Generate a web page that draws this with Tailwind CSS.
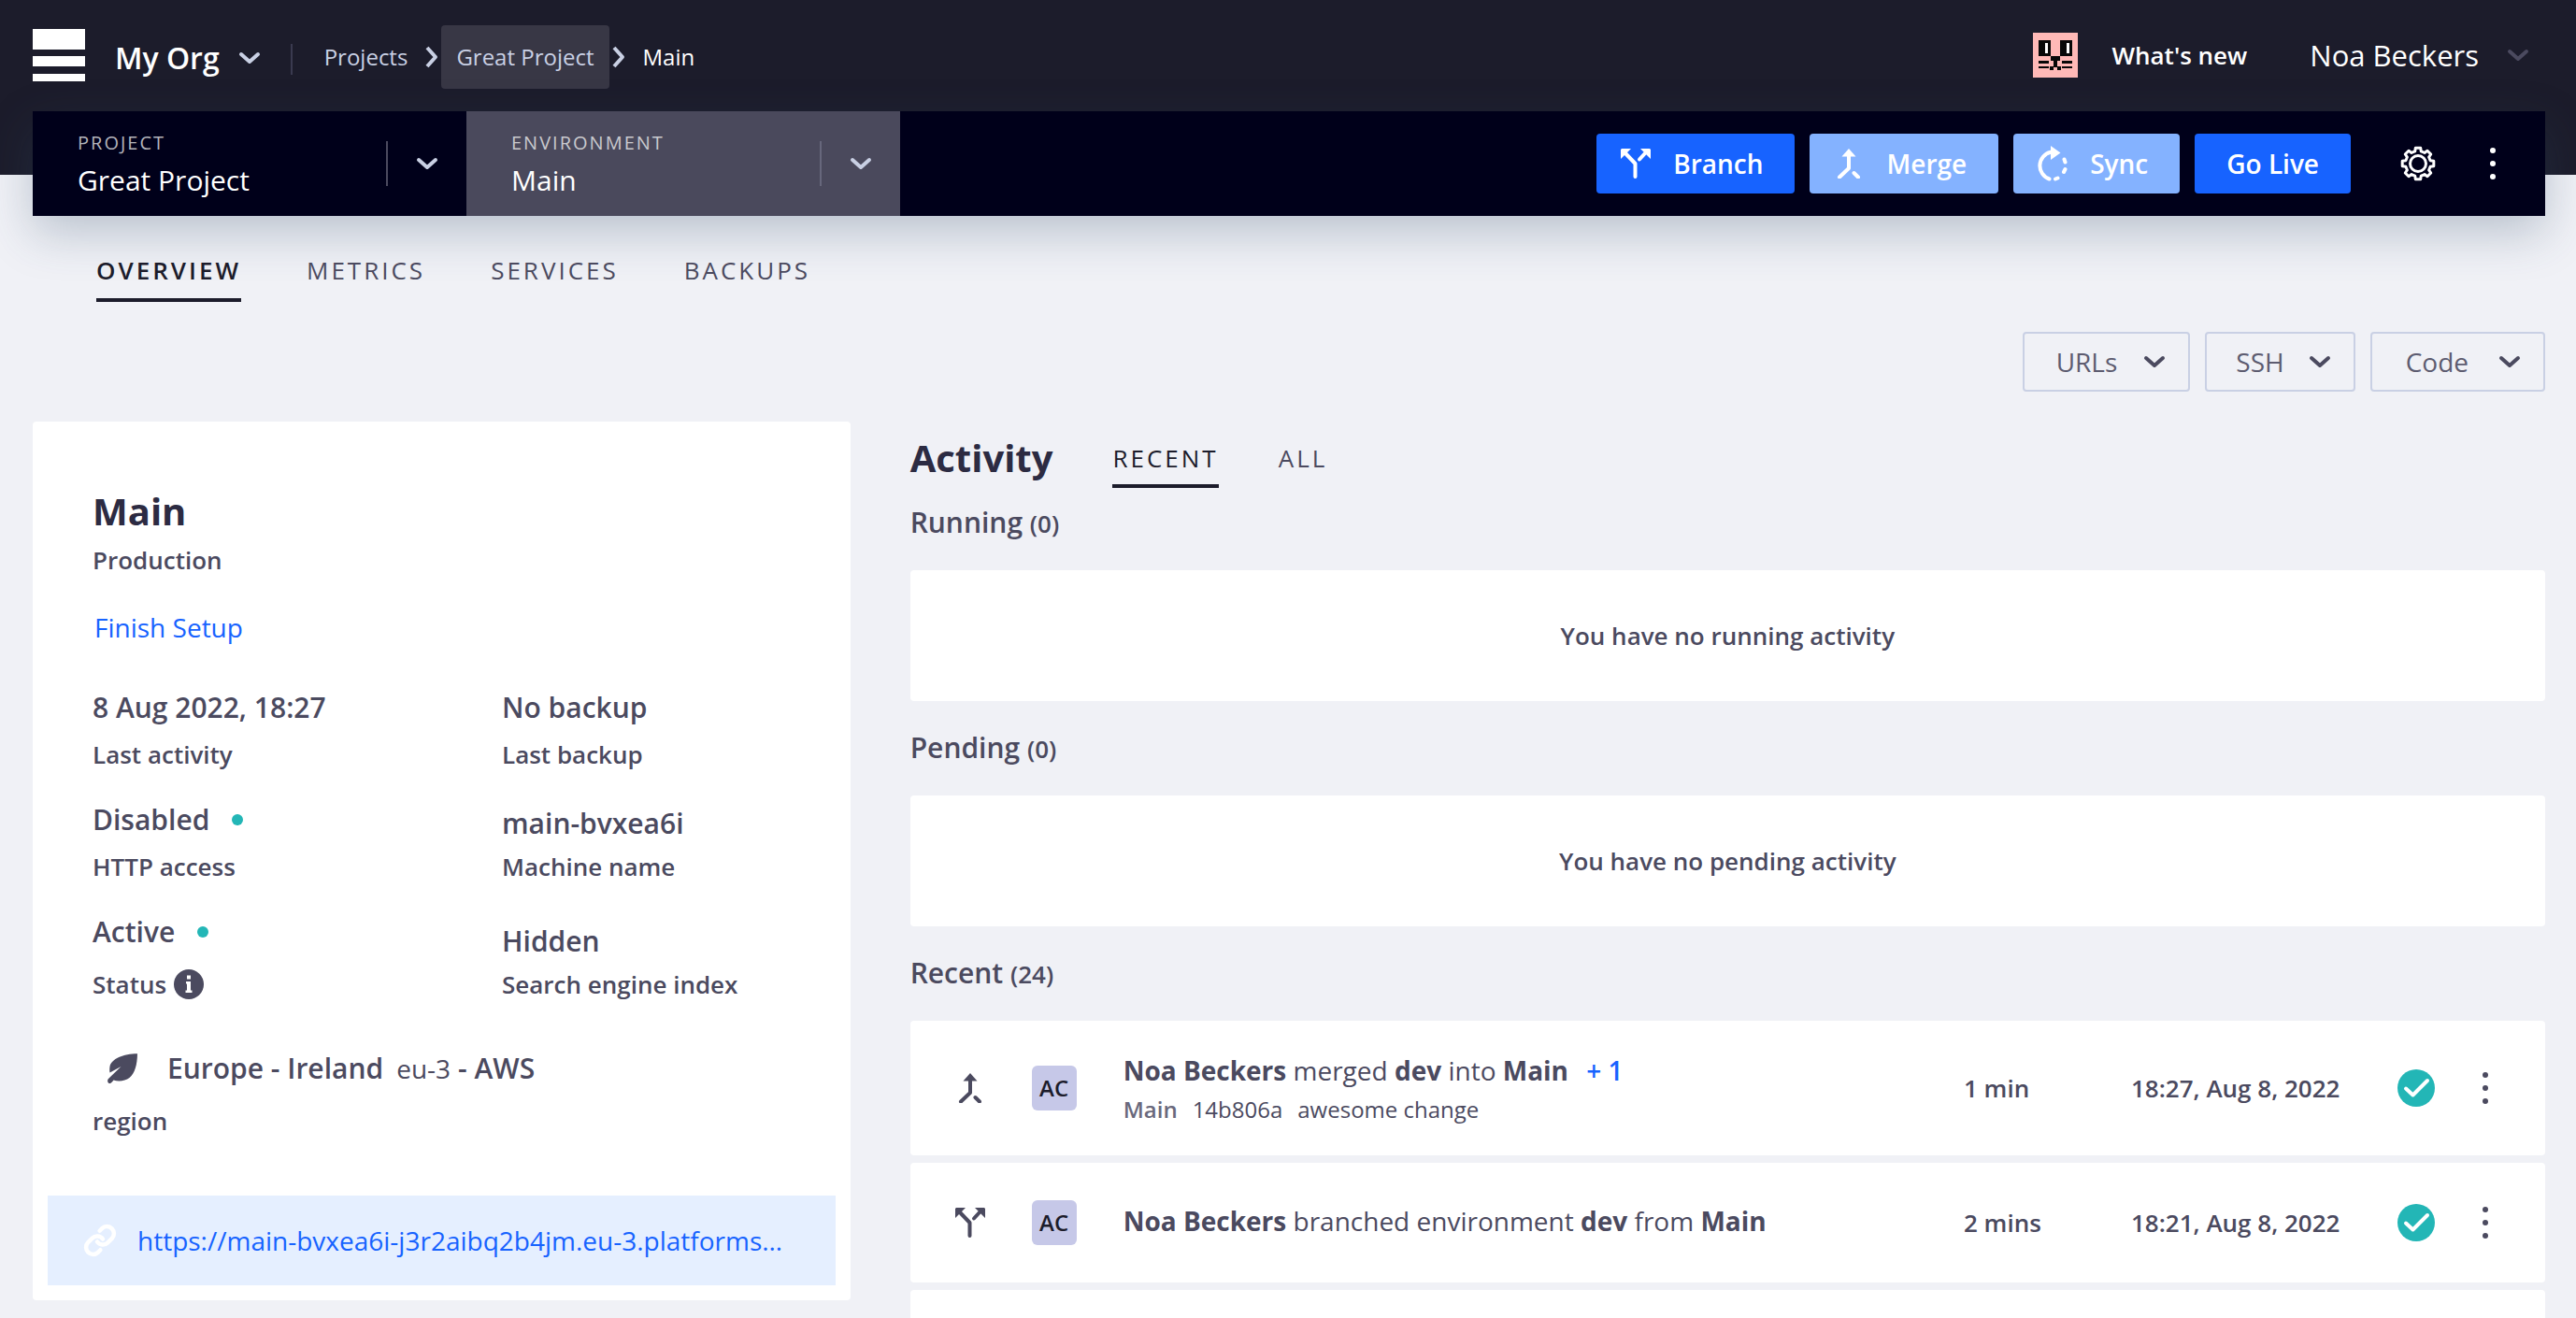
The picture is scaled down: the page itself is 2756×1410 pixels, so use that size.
<!DOCTYPE html>
<html lang="en">
<head>
<meta charset="utf-8">
<meta name="viewport" content="width=device-width, initial-scale=1">
<title>Main - Great Project</title>
<script src="https://cdn.jsdelivr.net/npm/@tailwindcss/browser@4"></script>
</head>
<body class="bg-[#f0f1f6] font-['Open_Sans',sans-serif] text-[#4b4a5f]">
<svg class="hidden" aria-hidden="true">
  <symbol id="down" viewBox="0 0 24 14"><path d="M3 3l9 8 9-8" fill="none" stroke="currentColor" stroke-width="4" stroke-linecap="round" stroke-linejoin="round"/></symbol>
  <symbol id="right" viewBox="0 0 16 24"><path d="M3 2l9 10-9 10" fill="none" stroke="currentColor" stroke-width="4" stroke-linejoin="round"/></symbol>
  <symbol id="branch" viewBox="0 0 32 32"><path d="M5 5l10.500 11V30M26 5l-6 6.500" fill="none" stroke="currentColor" stroke-width="4" stroke-linecap="round" stroke-linejoin="round"/><path d="M1 0h10L0 11V1zM31 0H21l11 11V1z" fill="currentColor"/></symbol>
  <symbol id="merge" viewBox="0 0 32 32"><path d="M16 6v15L6 30.500M21.500 26l4.500 4.500" fill="none" stroke="currentColor" stroke-width="4" stroke-linecap="round" stroke-linejoin="round"/><path d="M16 0l7.500 8.500h-15z" fill="currentColor"/></symbol>
  <symbol id="sync" viewBox="0 0 32 38"><path d="M14 6.700A15 15 0 0 0 12.500 35.500M28.500 14.500l1 3M29.500 25l-1.500 3M21.500 34.500l-2.500 1" fill="none" stroke="currentColor" stroke-width="4" stroke-linecap="round"/><path d="M14 0l10.500 7.500L14 15z" fill="currentColor"/></symbol>
  <symbol id="dots" viewBox="0 0 8 34"><g fill="currentColor"><circle cx="4" cy="3" r="3"/><circle cx="4" cy="17" r="3"/><circle cx="4" cy="31" r="3"/></g></symbol>
  <symbol id="check" viewBox="0 0 40 40"><circle cx="20" cy="20" r="20" fill="#23b6b6"/><path d="M9 20.500l7.500 7L32 12" fill="none" stroke="#fff" stroke-width="4" stroke-linecap="round" stroke-linejoin="round"/></symbol>
</svg>

<header class="flex h-[187px] items-start bg-[#1c1c2b] pr-[50px] pl-[35px] text-white">
  <a href="#" aria-label="Home" class="mt-[31px] block"><svg class="h-14 w-14" viewBox="0 0 56 56" fill="#fff"><path d="M0 0h56v22H0zM0 29h56v11H0zM0 48h56v8H0z"/></svg></a>
  <button class="mt-10 ml-8 flex h-11 items-center gap-[20px] text-[32px] font-semibold">My Org<svg class="h-[14px] w-6 text-[#c9d0e4]"><use href="#down"/></svg></button>
  <span class="mt-[47px] ml-8 h-[33px] w-[2px] bg-[#3a3a50]"></span>
  <nav aria-label="Breadcrumb" class="mt-[27px] ml-[34px] flex h-[68px] items-center text-[24px] text-[#c9d0e4]">
    <a href="#">Projects</a>
    <svg class="mr-[2px] ml-[18px] h-6 w-4"><use href="#right"/></svg>
    <a href="#" class="flex h-full items-center rounded bg-[#383745] px-4">Great Project</a>
    <svg class="mr-[18px] ml-[2px] h-6 w-4"><use href="#right"/></svg>
    <a href="#" class="text-white">Main</a>
  </nav>
  <div class="mt-[35px] ml-auto flex h-12 items-center">
    <svg class="h-12 w-12" viewBox="0 0 48 48" shape-rendering="crispEdges"><path fill="#ffb9b7" d="M0 0h48v48H0z"/><path fill="#080808" d="M6 8h13v17H6zM29 8h13v17H29zM19 25h10v5h-3v6h4v4h-4v-3h-4v3h-4v-4h4v-6h-3zM6 30h11v3H6zM31 30h11v3H31zM6 36h11v2H6zM31 36h11v2H31z"/><path fill="#fff" d="M13 11h3v11h-3zM36 11h3v11h-3z"/></svg>
    <a href="#" class="ml-9 text-[26px] font-semibold">What's new</a>
    <button class="ml-[67px] flex items-center gap-[30px] text-[31px]">Noa Beckers<svg class="h-[14px] w-6 text-[#4b4a5f]"><use href="#down"/></svg></button>
  </div>
</header>

<main class="pr-[33px] pl-[35px]">
  <section class="relative -mt-[68px] flex h-28 items-stretch bg-[#00001a] pr-[52px] text-white shadow-[0_18px_50px_rgba(45,75,105,0.28)]">
    <button class="flex w-[464px] items-center pr-[30px] pl-12 text-left">
      <span class="flex-1"><span class="block text-[20px] leading-7 font-medium tracking-[2px] text-[#b3b3ba]">PROJECT</span><span class="mt-2 block text-[30px] leading-9">Great Project</span></span>
      <span class="mr-[30px] h-12 w-[2px] bg-[#4b4a5f]"></span>
      <svg class="h-[14px] w-6 text-[#c9d0e4]"><use href="#down"/></svg>
    </button>
    <button class="flex w-[464px] items-center bg-[#4a495c] pr-[30px] pl-12 text-left">
      <span class="flex-1"><span class="block text-[20px] leading-7 font-medium tracking-[2px] text-[#c9c9ce]">ENVIRONMENT</span><span class="mt-2 block text-[30px] leading-9 font-medium">Main</span></span>
      <span class="mr-[30px] h-12 w-[2px] bg-[#67677c]"></span>
      <svg class="h-[14px] w-6 text-[#c9d0e4]"><use href="#down"/></svg>
    </button>
    <div class="ml-auto flex items-center gap-4 text-[28px] font-semibold">
      <button class="flex h-16 items-center gap-6 rounded bg-[#1763ff] pr-[34px] pl-[26px]"><svg class="size-8"><use href="#branch"/></svg>Branch</button>
      <button class="flex h-16 items-center gap-6 rounded bg-[#84b2ff] pr-[34px] pl-[26px]"><svg class="size-8"><use href="#merge"/></svg>Merge</button>
      <button class="flex h-16 items-center gap-6 rounded bg-[#84b2ff] pr-[34px] pl-[26px]"><svg class="h-[38px] w-8"><use href="#sync"/></svg>Sync</button>
      <button class="h-16 rounded bg-[#1763ff] px-[34px]">Go Live</button>
      <button aria-label="Settings" class="ml-9"><svg class="size-10" viewBox="-20 -20 40 40" fill="none" stroke="#fff" stroke-width="3" stroke-linejoin="round"><circle r="8.500"/><path d="M16.800 2.700L13.100 3.300 11.600 6.950 13.750 10 10 13.750 6.950 11.600 3.300 13.100 2.700 16.800H-2.700L-3.300 13.100-6.950 11.600-10 13.750-13.750 10-11.600 6.950-13.100 3.300-16.800 2.700V-2.700L-13.100-3.300-11.600-6.950-13.750-10-10-13.750-6.950-11.600-3.300-13.100-2.700-16.800H2.700L3.300-13.100 6.950-11.600 10-13.750 13.750-10 11.600-6.950 13.100-3.300 16.800-2.700z"/></svg></button>
      <button aria-label="More" class="ml-10"><svg class="h-[34px] w-2"><use href="#dots"/></svg></button>
    </div>
  </section>

  <nav aria-label="Environment" class="relative mt-10 ml-[68px] flex gap-[70px] text-[26px] leading-9 tracking-[3px]">
    <a href="#" class="border-b-4 border-[#1c1c2b] pb-3 font-semibold text-[#1c1c2b]">OVERVIEW</a>
    <a href="#">METRICS</a>
    <a href="#">SERVICES</a>
    <a href="#">BACKUPS</a>
  </nav>

  <div class="mt-8 flex justify-end gap-4 text-[28px] text-[#5d5c70]">
    <button class="flex h-16 items-center gap-7 rounded border-2 border-[#c9d0e4] pr-6 pl-[34px]">URLs<svg class="h-[14px] w-6 text-[#4b4a5f]"><use href="#down"/></svg></button>
    <button class="flex h-16 items-center gap-[26px] rounded border-2 border-[#c9d0e4] pr-6 pl-[31px]">SSH<svg class="h-[14px] w-6 text-[#4b4a5f]"><use href="#down"/></svg></button>
    <button class="flex h-16 items-center gap-8 rounded border-2 border-[#c9d0e4] pr-6 pl-9">Code<svg class="h-[14px] w-6 text-[#4b4a5f]"><use href="#down"/></svg></button>
  </div>

  <div class="mt-8 grid grid-cols-[1fr_2fr] items-start gap-16">
    <section class="min-w-0 rounded bg-white pt-[72px] pb-4 font-semibold">
      <div class="px-[64px]">
        <h1 class="text-[40px] leading-[48px] font-bold text-[#2c2b42]">Main</h1>
        <p class="mt-3 text-[26px] leading-8">Production</p>
        <a href="#" class="mt-[38px] ml-[2px] block text-[28px] leading-9 font-normal text-[#1763ff]">Finish Setup</a>
        <div class="mt-12 grid grid-cols-[438px_1fr] gap-y-[34px] text-[26px] leading-8">
          <div class="flex flex-col gap-[14px]"><b class="text-[30px] leading-10 font-semibold">8 Aug 2022, 18:27</b><span>Last activity</span></div>
          <div class="flex flex-col gap-[14px]"><b class="text-[30px] leading-10 font-semibold">No backup</b><span>Last backup</span></div>
          <div class="flex flex-col gap-[14px]"><b class="flex items-center gap-6 text-[30px] leading-10 font-semibold">Disabled<i class="size-3 rounded-full bg-[#23b6b6]"></i></b><span>HTTP access</span></div>
          <div class="flex flex-col justify-end gap-[10px]"><b class="text-[30px] leading-10 font-semibold">main-bvxea6i</b><span>Machine name</span></div>
          <div class="flex flex-col gap-5"><b class="flex items-center gap-6 text-[30px] leading-10 font-semibold">Active<i class="size-3 rounded-full bg-[#23b6b6]"></i></b><span class="flex items-center gap-2">Status<svg class="size-8" viewBox="0 0 32 32"><circle cx="16" cy="16" r="16" fill="currentColor"/><path d="M13 13h5v9.500h1.500V25h-7v-2.500H14v-7h-1zM14 6.500h4v4h-4z" fill="#fff"/></svg></span></div>
          <div class="flex flex-col justify-end gap-[10px]"><b class="text-[30px] leading-10 font-semibold">Hidden</b><span>Search engine index</span></div>
        </div>
        <div class="mt-[54px] flex items-center text-[30px] leading-10">
          <svg class="mr-8 ml-4 size-8" viewBox="0 0 32 32"><path d="M32 .3C17 .3 4 6 2.500 14c-.4 2.500-.3 4.500 0 6.500L14.500 14 1 27c-1.500 1.500-1 4.500 1 5 1.500.2 2.500-1 4.500-3.500C12 30.500 19 29.500 23.500 26 29.500 21 31.800 12 32 .3z" fill="currentColor"/></svg>
          Europe - Ireland<span class="mr-2 ml-[14px] text-[28px] font-normal">eu-3</span>- AWS
        </div>
        <p class="mt-5 text-[26px] leading-8">region</p>
      </div>
      <a href="#" class="mx-4 mt-16 flex h-24 items-center gap-[22px] bg-[#e5efff] pr-9 pl-[38px] text-[28px] font-normal text-[#1763ff]">
        <svg class="size-9 shrink-0" viewBox="0 0 24 24" fill="none" stroke="#fff" stroke-width="3" stroke-linecap="round" stroke-linejoin="round"><path d="M10 13a5 5 0 0 0 7.540.54l3-3a5 5 0 0 0-7.070-7.070l-1.720 1.710"/><path d="M14 11a5 5 0 0 0-7.540-.54l-3 3a5 5 0 0 0 7.070 7.070l1.710-1.710"/></svg>
        <span class="whitespace-nowrap">https://main-bvxea6i-j3r2aibq2b4jm.eu-3.platforms…</span>
      </a>
    </section>

    <section class="min-w-0 pt-[14px] font-semibold">
      <div class="flex items-start">
        <h2 class="text-[40px] leading-[50px] font-bold text-[#2c2b42]">Activity</h2>
        <nav aria-label="Activity" class="mt-[7px] ml-16 flex gap-16 text-[26px] leading-9 font-normal tracking-[3px]">
          <a href="#" class="border-b-4 border-[#1c1c2b] pb-[10px] text-[#1c1c2b]">RECENT</a>
          <a href="#">ALL</a>
        </nav>
      </div>
      <h3 class="mt-[17px] h-10 text-[30px] leading-10">Running <span class="text-[26px] leading-none">(0)</span></h3>
      <p class="mt-[31px] flex h-[140px] items-center justify-center rounded bg-white text-[26px]">You have no running activity</p>
      <h3 class="mt-[30px] h-10 text-[30px] leading-10">Pending <span class="text-[26px] leading-none">(0)</span></h3>
      <p class="mt-[31px] flex h-[140px] items-center justify-center rounded bg-white text-[26px]">You have no pending activity</p>
      <h3 class="mt-[30px] h-10 text-[30px] leading-10">Recent <span class="text-[26px] leading-none">(24)</span></h3>
      <ul class="mt-[31px] flex h-[318px] flex-col gap-2 overflow-hidden text-[26px]">
        <li class="flex h-36 shrink-0 items-center rounded bg-white pr-[60px] pl-12">
          <svg class="size-8"><use href="#merge"/></svg>
          <span class="ml-[50px] flex size-12 items-center justify-center rounded-md bg-[#c6c8e8] text-[24px] text-[#1c1c2b]">AC</span>
          <div class="ml-[50px] flex-1">
            <p class="text-[28px] leading-10 font-normal"><b>Noa Beckers</b> merged <b>dev</b> into <b>Main</b> <a href="#" class="ml-3 font-semibold text-[#1763ff]">+ 1</a></p>
            <p class="mt-[6px] flex gap-4 text-[24px] leading-8 font-normal"><span class="font-semibold text-[#6a697c]">Main</span><span>14b806a</span><span>awesome change</span></p>
          </div>
          <span class="w-[179px]">1 min</span>
          <time class="w-[285px]">18:27, Aug 8, 2022</time>
          <svg class="size-10" role="img" aria-label="Success"><use href="#check"/></svg>
          <button aria-label="More" class="ml-[50px]"><svg class="h-[34px] w-2"><use href="#dots"/></svg></button>
        </li>
        <li class="flex h-32 shrink-0 items-center rounded bg-white pr-[60px] pl-12">
          <svg class="size-8"><use href="#branch"/></svg>
          <span class="ml-[50px] flex size-12 items-center justify-center rounded-md bg-[#c6c8e8] text-[24px] text-[#1c1c2b]">AC</span>
          <div class="ml-[50px] flex-1 pb-1">
            <p class="text-[28px] leading-10 font-normal"><b>Noa Beckers</b> branched environment <b>dev</b> from <b>Main</b></p>
          </div>
          <span class="w-[179px]">2 mins</span>
          <time class="w-[285px]">18:21, Aug 8, 2022</time>
          <svg class="size-10" role="img" aria-label="Success"><use href="#check"/></svg>
          <button aria-label="More" class="ml-[50px]"><svg class="h-[34px] w-2"><use href="#dots"/></svg></button>
        </li>
        <li class="h-32 shrink-0 rounded bg-white"></li>
      </ul>
    </section>
  </div>
</main>
</body>
</html>
